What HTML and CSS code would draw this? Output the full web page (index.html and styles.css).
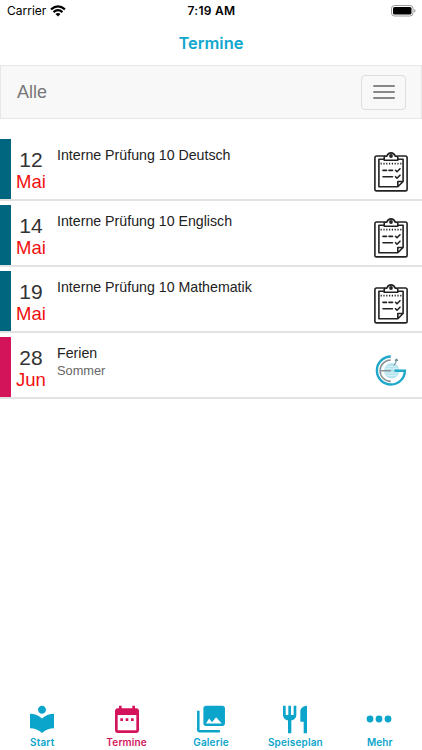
FILE: index.html
```html
<!DOCTYPE html>
<html lang="de">
<head>
    <meta charset="UTF-8">
    <meta name="viewport" content="width=device-width, initial-scale=1.0">
    <title>Termine</title>
    <link rel="stylesheet" href="styles.css">
</head>
<body>

    <!-- Icons used more than once -->
    <svg class="defs" width="0" height="0">
        <symbol id="clipboard" viewBox="0 0 34 40">
            <g fill="none" stroke="#222" stroke-width="1.6" stroke-linejoin="round" stroke-linecap="round">
                <path d="M10.5 4H2.6Q.9 4 .9 5.700V37.200Q.9 38.900 2.600 38.900H31.400Q33.100 38.900 33.100 37.200V5.700Q33.100 4 31.400 4H24"/>
                <path d="M10 7.300H4.900V34.800H23.800L29.100 29.500V7.300H24M23.800 34.800V29.500H29.100"/>
                <path d="M10.200 8.300V5.500Q10.200 4.100 11.700 4.100H12.900Q14 .9 17 .9T21.100 4.100H22.300Q23.800 4.100 23.800 5.500V8.300Z"/>
                <path d="M9 18.400H12.500M15 18.400H18.500M9 24.800H18.500M21.500 18.300L23 19.800L26 16.800M21.500 24.700L23 26.200L26 23.200"/>
                <path d="M7.200 10.700V12.500M10 10.700V12.500M12.800 10.700V12.500M15.600 10.700V12.500M18.400 10.700V12.500M21.200 10.700V12.500M24 10.700V12.500M26.800 10.700V12.500" stroke-width="1.200" stroke-linecap="butt"/>
            </g>
            <circle cx="17" cy="4" r="1.900" fill="#222"/>
        </symbol>
    </svg>

    <div class="statusbar">
        <div class="carrier">
            <span>Carrier</span>
            <svg width="16" height="12" viewBox="0 0 16 12">
                <g fill="none" stroke="#000" stroke-width="2.100">
                    <path d="M1 4.400Q8-1.800 15 4.400"/>
                    <path d="M3.500 7.100Q8 3 12.500 7.100"/>
                </g>
                <path d="M5.500 9Q8 6.900 10.500 9L8 11.500Z"/>
            </svg>
        </div>
        <div class="time">7:19 AM</div>
        <div class="battery">
            <svg width="25" height="12" viewBox="0 0 25 12">
                <rect x=".5" y=".5" width="21.500" height="10.500" rx="3" fill="#fff" stroke="#999"/>
                <rect x="2" y="2" width="18.500" height="7.500" rx="1.600"/>
                <path d="M23.200 4Q24.500 4.500 24.500 5.700T23.200 7.500Z" fill="#999"/>
            </svg>
        </div>
    </div>

    <h1>Termine</h1>

    <div class="navbar">
        <span class="brand">Alle</span>
        <button class="toggle" aria-label="Menü">
            <span class="line"></span>
            <span class="line"></span>
            <span class="line"></span>
        </button>
    </div>

    <div class="list">
        <div class="event">
            <div class="date"><span class="day">12</span><span class="month">Mai</span></div>
            <div class="info"><div class="name">Interne Prüfung 10 Deutsch</div></div>
            <svg class="icon" width="34" height="40"><use href="#clipboard"/></svg>
        </div>
        <div class="event">
            <div class="date"><span class="day">14</span><span class="month">Mai</span></div>
            <div class="info"><div class="name">Interne Prüfung 10 Englisch</div></div>
            <svg class="icon" width="34" height="40"><use href="#clipboard"/></svg>
        </div>
        <div class="event">
            <div class="date"><span class="day">19</span><span class="month">Mai</span></div>
            <div class="info"><div class="name">Interne Prüfung 10 Mathematik</div></div>
            <svg class="icon" width="34" height="40"><use href="#clipboard"/></svg>
        </div>
        <div class="event holiday">
            <div class="date"><span class="day">28</span><span class="month">Jun</span></div>
            <div class="info">
                <div class="name">Ferien</div>
                <div class="sub">Sommer</div>
            </div>
            <!-- School logo -->
            <svg class="icon" width="34" height="40" viewBox="0 0 34 40">
                <circle cx="17.700" cy="20.700" r="7.700" fill="#b5e3ee"/>
                <path d="M12 16.500H23M10.500 18.500H24.500M11 23H24.500M12.500 25.500H22.500" stroke="#dff4f8" stroke-width=".7"/>
                <g fill="none">
                    <path d="M16.800 6.500A14 14 0 1 0 30.900 20.700H20.500" stroke="#20a8cb" stroke-width="2.400"/>
                    <path d="M16.800 10A10.700 10.700 0 0 0 16.800 31.400M6.500 20.700H17" stroke="#8b9498" stroke-width="1.600"/>
                    <path d="M20 15.500Q22.300 13 22.500 9M21 11L22.500 8.800L23.900 11" stroke="#517985" stroke-width="1"/>
                </g>
            </svg>
        </div>
    </div>

    <div class="tabbar">
        <div class="tab">
            <svg width="32" height="32" viewBox="0 0 24 24"><path d="M12 11.550C9.640 9.350 6.480 8 3 8v11c3.480 0 6.640 1.350 9 3.550 2.360-2.190 5.520-3.550 9-3.550V8c-3.480 0-6.640 1.350-9 3.550zM12 8c1.660 0 3-1.340 3-3s-1.340-3-3-3-3 1.340-3 3 1.340 3 3 3z"/></svg>
            <span>Start</span>
        </div>
        <div class="tab active">
            <svg width="32" height="32" viewBox="0 0 24 24"><path fill-rule="evenodd" d="M9 11.500H7v2h2zm4 0h-2v2h2zm4 0h-2v2h2zM19 4h-1V2h-2v2H8V2H6v2H5c-1.100 0-2 .9-2 2v14.500c0 1.100.9 2 2 2h14c1.100 0 2-.9 2-2V6c0-1.100-.9-2-2-2zm0 16.500H5V9h14z"/></svg>
            <span>Termine</span>
        </div>
        <div class="tab">
            <svg width="32" height="32" viewBox="-.6 -.2 25.200 25.200"><path d="M23 16V4c0-1.100-.9-2-2-2H8c-1.100 0-2 .9-2 2v12c0 1.100.9 2 2 2h13c1.100 0 2-.9 2-2zM10.500 12l2.300 2.900L16 11l4.500 5H8zM1 6v15c0 1.100.9 2 2 2h16v-2H3V6z"/></svg>
            <span>Galerie</span>
        </div>
        <div class="tab">
            <svg width="32" height="32" viewBox="0 0 24 24"><path d="M11 9H9V2H7v7H5V2H3v7c0 2.120 1.660 3.840 3.750 3.970V22.600h2.500V12.970C11.340 12.840 13 11.120 13 9V2h-2v7zm5-3v8h2.500v8.600H21V2c-2.760 0-5 2.240-5 4z"/></svg>
            <span>Speiseplan</span>
        </div>
        <div class="tab">
            <svg width="32" height="32" viewBox="0 0 32 32"><circle cx="6" cy="16" r="3.400"/><circle cx="15" cy="16" r="3.400"/><circle cx="24" cy="16" r="3.400"/></svg>
            <span>Mehr</span>
        </div>
    </div>

</body>
</html>
```
FILE: styles.css
```css
* {
    box-sizing: border-box;
}

body {
    margin: 0;
    height: 750px;
    display: flex;
    flex-direction: column;
    background-color: #fff;
    font-family: "Liberation Sans", Arial, sans-serif;
    overflow: hidden;
}

.defs {
    display: block;
    flex: none;
}

.statusbar {
    display: grid;
    grid-template-columns: 1fr auto 1fr;
    align-items: center;
    height: 22px;
    padding: 0 6px 1px 7px;
    font-family: Inter, sans-serif;
    font-size: 12px;
    color: #000;
}

.carrier {
    display: flex;
    align-items: center;
    gap: 4px;
}

.time {
    font-weight: 600;
    letter-spacing: 0.3px;
}

.battery {
    display: flex;
    justify-content: flex-end;
}

h1 {
    margin: 0;
    height: 43px;
    line-height: 43px;
    text-align: center;
    font-family: Inter, sans-serif;
    font-size: 16.5px;
    font-weight: 600;
    color: #10a7cf;
}

.navbar {
    display: flex;
    justify-content: space-between;
    align-items: center;
    height: 54px;
    padding: 0 15px 0 16px;
    background-color: #f8f8f8;
    border: 1px solid #e7e7e7;
}

.brand {
    font-size: 18px;
    color: #777;
}

.toggle {
    display: flex;
    flex-direction: column;
    align-items: center;
    justify-content: center;
    gap: 4px;
    width: 45px;
    height: 35px;
    padding: 0;
    background: none;
    border: 1px solid #ddd;
    border-radius: 4px;
}

.line {
    width: 22px;
    height: 2px;
    border-radius: 1px;
    background-color: #888;
}

.list {
    flex: 1;
    padding-top: 20px;
}

.event {
    display: flex;
    height: 62px;
    margin-bottom: 4px;
    padding-right: 14px;
    border-bottom: 2px solid #e2e2e2;
}

.event::before {
    content: "";
    width: 11px;
    background-color: #006680;
}

.holiday::before {
    background-color: #d4145a;
}

.date {
    display: flex;
    flex-direction: column;
    width: 40px;
    padding-top: 10px;
    text-align: center;
}

.day {
    font-size: 21px;
    line-height: 22px;
    color: #333;
}

.month {
    font-size: 18.5px;
    line-height: 21px;
    color: #f00f0f;
}

.info {
    flex: 1;
    padding: 8px 0 0 6px;
}

.name {
    font-size: 14.2px;
    line-height: 16px;
    color: #222;
}

.sub {
    font-size: 12.8px;
    line-height: 20px;
    color: #666;
}

.icon {
    margin-top: 13px;
}

.tabbar {
    display: flex;
    height: 47px;
}

.tab {
    flex: 1;
    display: flex;
    flex-direction: column;
    align-items: center;
    font-family: Inter, sans-serif;
    font-size: 10px;
    font-weight: 600;
    line-height: 12px;
    letter-spacing: 0.15px;
    color: #0ba5cb;
    fill: #0ba5cb;
}

.tab svg {
    margin-bottom: 1px;
}

.active {
    color: #d4145a;
    fill: #d4145a;
}
```
